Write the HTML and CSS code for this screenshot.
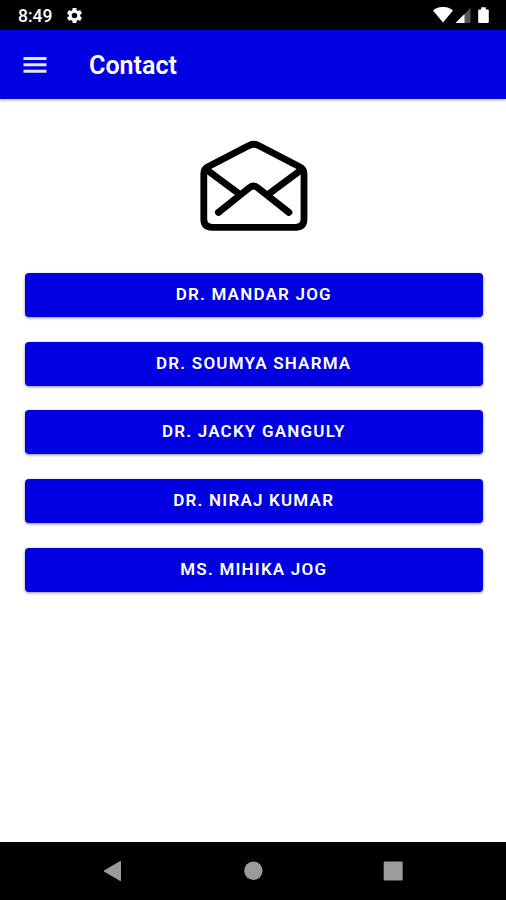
FILE: index.html
```
<!DOCTYPE html>
<html lang="en">

<head>
    <meta charset="UTF-8">
    <title>Contact</title>
    <link rel="stylesheet" href="styles.css">
</head>

<body>
    <div class="screen">

        <!-- Status bar -->
        <div class="status_bar">
            <span class="time">8:49</span>
            <svg class="gear" width="19" height="19" viewBox="0 0 24 24">
                <path fill="#fff" fill-rule="evenodd" d="M19.14 12.94c.04-.3.06-.61.06-.94s-.02-.64-.07-.94l2.03-1.58c.18-.14.23-.41.12-.61l-1.92-3.32c-.12-.22-.37-.29-.59-.22l-2.39.96c-.5-.38-1.03-.7-1.62-.94l-.36-2.54c-.04-.24-.24-.41-.48-.41h-3.84c-.24 0-.43.17-.47.41l-.36 2.54c-.59.24-1.13.57-1.62.94l-2.39-.96c-.22-.08-.47 0-.59.22L2.74 8.87c-.12.21-.08.47.12.61l2.03 1.58c-.05.3-.09.63-.09.94s.02.64.07.94l-2.03 1.58c-.18.14-.23.41-.12.61l1.92 3.32c.12.22.37.29.59.22l2.39-.96c.5.38 1.03.7 1.62.94l.36 2.54c.05.24.24.41.48.41h3.84c.24 0 .44-.17.47-.41l.36-2.54c.59-.24 1.13-.56 1.62-.94l2.39.96c.22.08.47 0 .59-.22l1.92-3.32c.12-.22.07-.47-.12-.61l-2.01-1.58zM12 15.6c-1.98 0-3.6-1.62-3.6-3.6s1.62-3.6 3.6-3.6 3.6 1.62 3.6 3.6-1.62 3.6-3.6 3.6z"/>
            </svg>
            <svg class="signals" width="58" height="18" viewBox="0 0 58 18">
                <path fill="#fff" d="M0 3.400C5.500-1.200 14.500-1.200 20 3.400L10 15.400z"/>
                <path fill="#555" d="M37.500 1v15H22.500z"/>
                <path fill="#fff" d="M31.500 7v9H22.500z"/>
                <path fill="#fff" d="M46 2.500h2.200V.2h4.600v2.300H55q.8 0 .8.900v11.700q0 .9-.9.900h-8.800q-.9 0-.9-.9V3.400q0-.9.800-.9z"/>
            </svg>
        </div>

        <!-- App bar -->
        <div class="app_bar">
            <svg class="menu" width="24" height="16" viewBox="0 0 24 16">
                <path fill="#fff" fill-opacity=".9" d="M.5 0h23v3H.5zM.5 6.300h23v3H.5zM.5 12.700h23v3H.5z"/>
            </svg>
            <h1>Contact</h1>
        </div>

        <!-- Contact list -->
        <div class="content">
            <svg class="envelope" width="110" height="94" viewBox="0 0 110 94">
                <g fill="none" stroke="#000" stroke-width="6.800" stroke-linecap="round" stroke-linejoin="round">
                    <path d="M4.800 34.500Q4.800 30 9 27.700L49.500 6.800Q54.800 3.600 60 6.800L100.500 27.700Q105 30 105 34.500V80Q105 88.300 96.500 88.300H13.300Q4.800 88.300 4.800 80z"/>
                    <path d="M8 31L41 55.500M102 31L69 55.500M19.300 73.500L50.500 48.700Q54.500 45.500 58.500 48.700L90 73.500"/>
                </g>
            </svg>
            <button>DR. MANDAR JOG</button>
            <button>DR. SOUMYA SHARMA</button>
            <button>DR. JACKY GANGULY</button>
            <button>DR. NIRAJ KUMAR</button>
            <button>MS. MIHIKA JOG</button>
        </div>

        <!-- Navigation bar -->
        <div class="nav_bar">
            <svg width="20" height="22" viewBox="0 0 20 22">
                <path fill="#9b9b9b" stroke="#9b9b9b" stroke-linejoin="round" d="M1 11L17.500 1.300v19.400z"/>
            </svg>
            <svg width="20" height="22" viewBox="0 0 20 22">
                <circle cx="10.400" cy="10.700" r="9.200" fill="#9b9b9b"/>
            </svg>
            <svg width="20" height="22" viewBox="0 0 20 22">
                <rect x=".7" y="1.500" width="19" height="19" rx="1" fill="#9b9b9b"/>
            </svg>
        </div>
    </div>
</body>

</html>
```
FILE: styles.css
```
* {
    margin: 0;
    padding: 0;
    box-sizing: border-box;
}

body {
    background-color: #fff;
    font-family: Roboto, "Liberation Sans", sans-serif;
    color: #fff;
}

.screen {
    display: flex;
    flex-direction: column;
    height: 900px;
    overflow: hidden;
}

.status_bar {
    display: flex;
    align-items: center;
    height: 29.5px;
    padding: 2px 15px 0 18px;
    background-color: #000;
}

.time {
    font-size: 17.5px;
    font-weight: 500;
}

.gear {
    margin-left: 12.5px;
}

.signals {
    margin-left: auto;
}

.app_bar {
    display: flex;
    align-items: center;
    height: 69px;
    padding-left: 23px;
    background-color: #0000e0;
    box-shadow: 0 1px 3px rgba(0, 0, 0, 0.3);
}

.menu {
    margin-top: 1px;
}

h1 {
    margin-left: 42px;
    padding-top: 3px;
    font-size: 25.1px;
    font-weight: 600;
}

.content {
    flex: 1;
    display: flex;
    flex-direction: column;
    align-items: center;
    gap: 24.8px;
    padding: 40.5px 23.5px 0 25px;
}

.envelope {
    margin-bottom: 15px;
}

button {
    width: 100%;
    height: 44px;
    padding-bottom: 2px;
    border: none;
    border-radius: 4px;
    background-color: #0000e0;
    box-shadow: 0 1px 3px rgba(0, 0, 0, 0.45);
    color: #fff;
    font-family: inherit;
    font-size: 17px;
    font-weight: 600;
    letter-spacing: 1.2px;
    cursor: pointer;
}

.nav_bar {
    display: flex;
    justify-content: space-between;
    align-items: center;
    height: 58px;
    padding: 0 103px;
    background-color: #000;
}
```
